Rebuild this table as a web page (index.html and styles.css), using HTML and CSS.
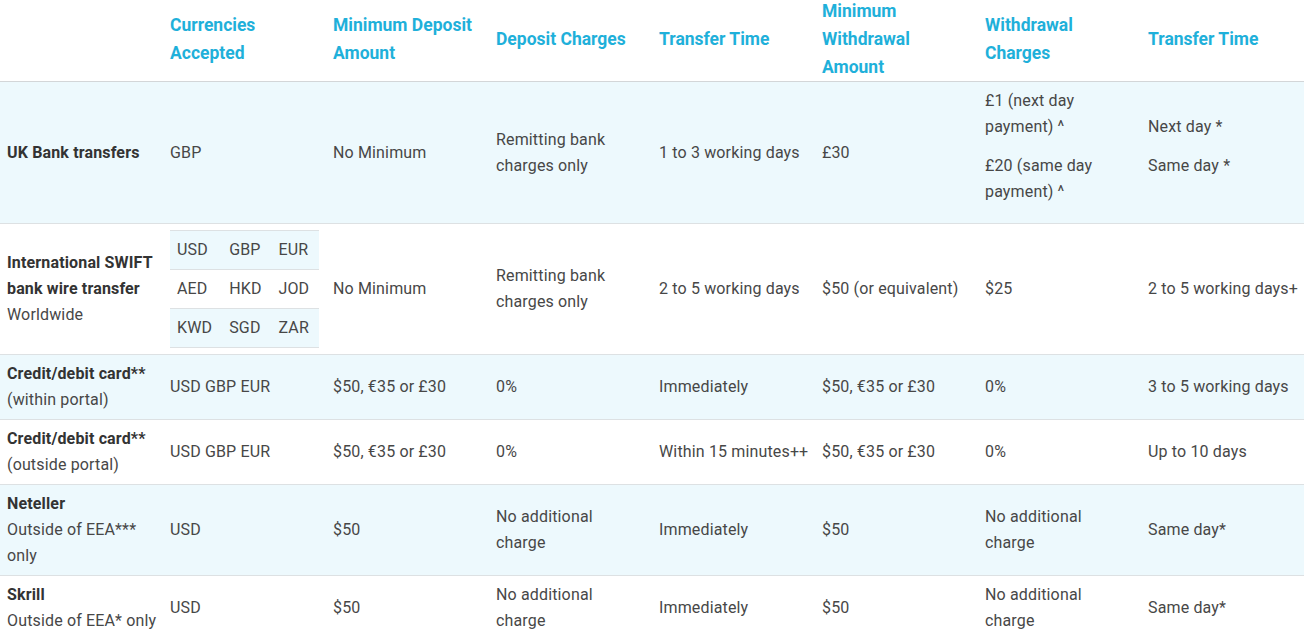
FILE: index.html
```html
<!DOCTYPE html>
<html lang="en">
<head>
<meta charset="utf-8">
<title>Funding methods</title>
<link rel="stylesheet" href="styles.css">
</head>
<body>
<table class="fees">
  <thead>
    <tr>
      <th></th>
      <th>Currencies Accepted</th>
      <th>Minimum Deposit Amount</th>
      <th>Deposit Charges</th>
      <th>Transfer Time</th>
      <th>Minimum Withdrawal Amount</th>
      <th>Withdrawal Charges</th>
      <th>Transfer Time</th>
    </tr>
  </thead>
  <tbody>
    <tr>
      <td><strong>UK Bank transfers</strong></td>
      <td>GBP</td>
      <td>No Minimum</td>
      <td>Remitting bank charges only</td>
      <td>1 to 3 working days</td>
      <td>£30</td>
      <td><p>£1 (next day payment) ^</p><p>£20 (same day payment) ^</p></td>
      <td><p>Next day *</p><p>Same day *</p></td>
    </tr>
    <tr>
      <td><strong>International SWIFT bank wire transfer</strong><br>Worldwide</td>
      <td>
        <table class="ccy">
          <tbody>
            <tr><td>USD</td><td>GBP</td><td>EUR</td></tr>
            <tr><td>AED</td><td>HKD</td><td>JOD</td></tr>
            <tr><td>KWD</td><td>SGD</td><td>ZAR</td></tr>
          </tbody>
        </table>
      </td>
      <td>No Minimum</td>
      <td>Remitting bank charges only</td>
      <td>2 to 5 working days</td>
      <td>$50 (or equivalent)</td>
      <td>$25</td>
      <td class="nowrap">2 to 5 working days+</td>
    </tr>
    <tr>
      <td><strong>Credit/debit card**</strong><br>(within portal)</td>
      <td>USD GBP EUR</td>
      <td>$50, €35 or £30</td>
      <td>0%</td>
      <td>Immediately</td>
      <td>$50, €35 or £30</td>
      <td>0%</td>
      <td>3 to 5 working days</td>
    </tr>
    <tr>
      <td><strong>Credit/debit card**</strong><br>(outside portal)</td>
      <td>USD GBP EUR</td>
      <td>$50, €35 or £30</td>
      <td>0%</td>
      <td class="nowrap">Within 15 minutes++</td>
      <td>$50, €35 or £30</td>
      <td>0%</td>
      <td>Up to 10 days</td>
    </tr>
    <tr>
      <td><strong>Neteller</strong><br>Outside of EEA*** only</td>
      <td>USD</td>
      <td>$50</td>
      <td>No additional charge</td>
      <td>Immediately</td>
      <td>$50</td>
      <td>No additional charge</td>
      <td>Same day*</td>
    </tr>
    <tr>
      <td><strong>Skrill</strong><br><span class="nowrap">Outside of EEA* only</span></td>
      <td>USD</td>
      <td>$50</td>
      <td>No additional charge</td>
      <td>Immediately</td>
      <td>$50</td>
      <td>No additional charge</td>
      <td>Same day*</td>
    </tr>
  </tbody>
</table>
</body>
</html>
```

FILE: styles.css
```css
html, body {
  margin: 0;
  padding: 0;
  background: #ffffff;
}

body {
  font-family: Roboto, "Liberation Sans", Arial, sans-serif;
  font-size: 16px;
  letter-spacing: 0.15px;
  line-height: 26px;
  color: #474747;
  overflow: hidden;
}

.fees {
  width: 1304px;
  table-layout: fixed;
  border-collapse: collapse;
  margin-top: -3px;
}

.fees th {
  text-align: left;
  vertical-align: middle;
  font-size: 17.5px;
  letter-spacing: 0;
  line-height: 28px;
  font-weight: 700;
  color: #1fb0da;
  padding: 0 7px;
  border-bottom: 1px solid #d3d6d8;
}

.fees > tbody > tr > td {
  vertical-align: middle;
  padding: 6px 7px;
  border-top: 1px solid #dde1e3;
}

.fees > tbody > tr:nth-child(odd) > td {
  background: #edf9fd;
}

.fees > tbody > tr:first-child > td {
  border-top: 0;
}

.fees strong {
  color: #333333;
  font-weight: 700;
}

.fees p {
  margin: 0 0 13px;
}

.fees p:last-child {
  margin-bottom: 12px;
}

.nowrap {
  white-space: nowrap;
}

.ccy {
  width: 100%;
  border-collapse: collapse;
  border-top: 1px solid #dde1e3;
}

.ccy td {
  padding: 6px 7px;
  border-bottom: 1px solid #dde1e3;
}

.ccy tr:nth-child(odd) td {
  background: #edf9fd;
}
```
